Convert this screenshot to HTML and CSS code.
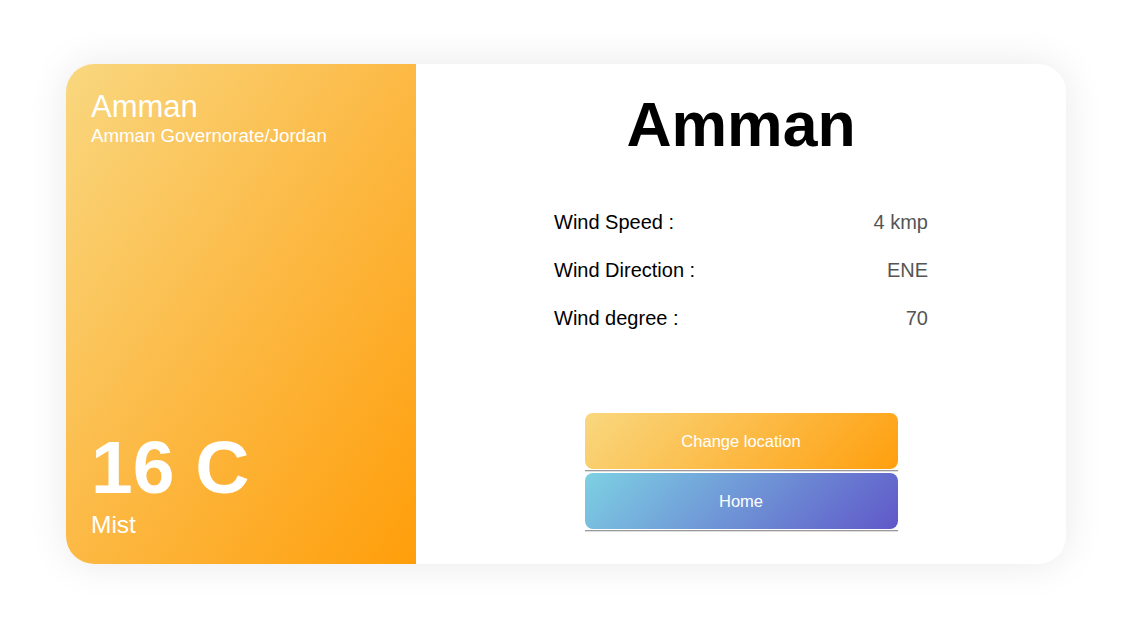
FILE: index.html
```html
<!DOCTYPE html>
<html lang="en">
<head>
<meta charset="utf-8">
<title>Weather - Amman</title>
<link rel="stylesheet" href="styles.css">
</head>
<body>
<main class="card">
  <section class="side">
    <div class="side-top">
      <div class="city">Amman</div>
      <div class="region">Amman Governorate/Jordan</div>
    </div>
    <div class="side-bottom">
      <div class="temp">16 C</div>
      <div class="cond">Mist</div>
    </div>
  </section>
  <section class="detail">
    <h1 class="title">Amman</h1>
    <div class="rows">
      <div class="row"><span class="label">Wind Speed :</span><span class="value">4 kmp</span></div>
      <div class="row"><span class="label">Wind Direction :</span><span class="value">ENE</span></div>
      <div class="row"><span class="label">Wind degree :</span><span class="value">70</span></div>
    </div>
    <div class="actions">
      <div class="btn-wrap"><button class="btn btn-orange">Change location</button></div>
      <div class="btn-wrap"><button class="btn btn-blue">Home</button></div>
    </div>
  </section>
</main>
</body>
</html>
```
FILE: styles.css
```css
* { box-sizing: border-box; }
html, body { margin: 0; padding: 0; background: #fff; }
body {
  font-family: "Liberation Sans", Arial, sans-serif;
  padding: 64px 0 0 66px;
  width: 1125px;
  height: 642px;
  overflow: hidden;
}
.card {
  width: 1000px;
  height: 500px;
  display: flex;
  border-radius: 28px;
  background: #fff;
  box-shadow: 0 0 40px rgba(0, 0, 0, 0.09);
  overflow: hidden;
}
.side {
  width: 350px;
  flex: none;
  background: linear-gradient(to bottom right, #f9d77f 0%, #fcb944 50%, #ff9e0a 100%);
  color: #fff;
  padding: 24px 25px 25px 25px;
  display: flex;
  flex-direction: column;
  justify-content: space-between;
}
.city { font-size: 31px; line-height: 37px; }
.region { font-size: 18.7px; line-height: 21px; }
.temp { font-size: 75px; line-height: 76px; font-weight: bold; }
.cond { font-size: 24.5px; line-height: 28px; margin-top: 6px; }
.detail {
  flex: 1;
  padding-top: 24px;
  display: flex;
  flex-direction: column;
  align-items: center;
}
.title {
  margin: 0;
  font-size: 62.5px;
  line-height: 72px;
  font-weight: bold;
  color: #000;
}
.rows {
  width: 374px;
  margin-top: 38px;
}
.row {
  display: flex;
  justify-content: space-between;
  font-size: 20px;
  line-height: 48px;
}
.label { color: #000; }
.value { color: #555; }
.actions {
  margin-top: 71px;
  width: 313px;
  display: flex;
  flex-direction: column;
  gap: 2px;
}
.btn-wrap {
  border-bottom: 1px solid #9a9a9a;
  box-shadow: 0 1px 0 #dedede;
  padding-bottom: 1px;
}
.btn {
  display: block;
  width: 100%;
  height: 56px;
  border: none;
  border-radius: 8px;
  color: #fff;
  font-family: "Liberation Sans", Arial, sans-serif;
  font-size: 16.5px;
  cursor: pointer;
}
.btn-orange { background: linear-gradient(135deg, #f9d77f 0%, #ff9f0e 100%); }
.btn-blue { background: linear-gradient(135deg, #7dd0e3 0%, #6058c9 100%); }
```
